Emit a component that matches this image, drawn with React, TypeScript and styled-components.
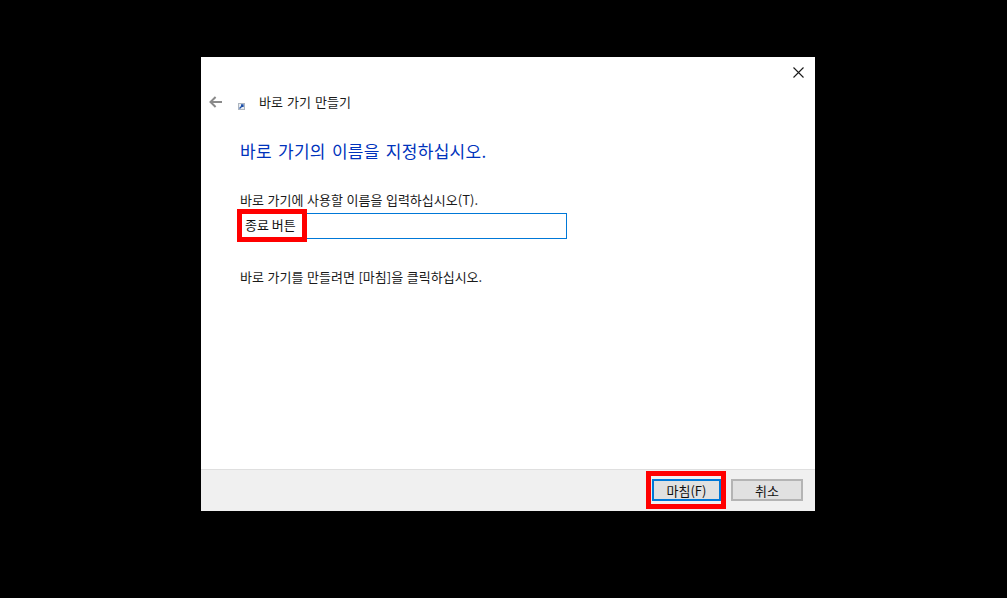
import React from 'react'
import styled, { createGlobalStyle } from 'styled-components'

const GlobalStyle = createGlobalStyle`
  html, body {
    margin: 0;
    height: 100%;
    background: #000;
  }
  body {
    font-family: "Noto Sans CJK KR", "Liberation Sans", sans-serif;
    overflow: hidden;
  }
`

export default function App() {
  return (
    <Screen>
      <GlobalStyle />
      <Dialog>
        <TitleRow>
          <CloseButton aria-label="닫기">
            <svg width="11" height="11" viewBox="0 0 11 11">
              <path d="M0.5 0.5 L10.5 10.5 M10.5 0.5 L0.5 10.5" stroke="#1a1a1a" strokeWidth="1.1" fill="none" />
            </svg>
          </CloseButton>
        </TitleRow>
        <NavRow>
          <BackArrow width="14" height="12" viewBox="0 0 14 12">
            <path d="M13 6 H1.8 M6.6 1 L1.5 6 L6.6 11" stroke="#8a8a8a" strokeWidth="2" fill="none" />
          </BackArrow>
          <ShortcutIcon width="7" height="7" viewBox="0 0 7 7">
            <rect width="7" height="7" fill="#aeb6c0" />
            <rect x="1" y="1" width="5" height="5" fill="#e8ecf1" />
            <path d="M1.5 5.5 L4.5 2.5 M3 2 H5 V4" stroke="#1c4fa8" strokeWidth="1.3" fill="none" />
          </ShortcutIcon>
          <NavTitle>바로 가기 만들기</NavTitle>
        </NavRow>
        <Body>
          <Heading>바로 가기의 이름을 지정하십시오.</Heading>
          <FieldLabel htmlFor="shortcut-name">바로 가기에 사용할 이름을 입력하십시오(T).</FieldLabel>
          <NameField>
            <NameInput id="shortcut-name" defaultValue="종료 버튼" />
            <InputHighlight />
          </NameField>
          <Hint>바로 가기를 만들려면 [마침]을 클릭하십시오.</Hint>
        </Body>
        <Footer>
          <PrimarySlot>
            <ActionButton $primary>마침(F)</ActionButton>
            <ButtonHighlight />
          </PrimarySlot>
          <ActionButton>취소</ActionButton>
        </Footer>
      </Dialog>
    </Screen>
  )
}

const Screen = styled.div`
  width: 1007px;
  height: 598px;
  padding: 57px 0 0 201px;
  box-sizing: border-box;
  background: #000;
`

const Dialog = styled.div`
  display: flex;
  flex-direction: column;
  width: 614px;
  height: 454px;
  background: #fff;
`

const TitleRow = styled.div`
  display: flex;
  justify-content: flex-end;
  height: 30px;
  padding: 10px 11px 0 0;
  box-sizing: border-box;
`

const CloseButton = styled.div`
  width: 11px;
  height: 11px;
  line-height: 0;
`

const NavRow = styled.div`
  display: flex;
  align-items: center;
  height: 30px;
  padding-left: 8px;
`

const BackArrow = styled.svg`
  flex: none;
  margin-top: -1px;
`

const ShortcutIcon = styled.svg`
  flex: none;
  margin: 8px 0 0 15px;
`

const NavTitle = styled.span`
  margin-left: 14px;
  font-size: 13px;
  line-height: 30px;
  letter-spacing: 0.05px;
  word-spacing: 1px;
  color: #1a1a1a;
`

const Body = styled.div`
  display: flex;
  flex-direction: column;
  align-items: flex-start;
  flex: 1;
  padding: 22px 0 0 39px;
`

const Heading = styled.h1`
  margin: 0;
  font-size: 17px;
  font-weight: 400;
  line-height: 24px;
  color: #0033bc;
  letter-spacing: 0.3px;
  word-spacing: 2px;
`

const FieldLabel = styled.label`
  margin-top: 28px;
  font-size: 13px;
  line-height: 18px;
  letter-spacing: 0.02px;
  word-spacing: 0.6px;
  color: #1a1a1a;
`

const NameField = styled.div`
  position: relative;
  width: 327px;
  height: 26px;
  margin-top: 4px;
`

const NameInput = styled.input`
  display: block;
  width: 100%;
  height: 100%;
  padding: 0 0 4px 4px;
  box-sizing: border-box;
  border: 1px solid #0078d7;
  outline: none;
  font: inherit;
  font-size: 13px;
  color: #111;
  background: #fff;
`

const InputHighlight = styled.div`
  position: absolute;
  left: -3px;
  top: -4px;
  width: 70px;
  height: 33px;
  box-sizing: border-box;
  border: 5px solid #f00;
  pointer-events: none;
`

const Hint = styled.p`
  margin: 29px 0 0;
  font-size: 13px;
  line-height: 18px;
  letter-spacing: 0.02px;
  word-spacing: 0.6px;
  color: #1a1a1a;
`

const Footer = styled.div`
  display: flex;
  justify-content: flex-end;
  align-items: flex-start;
  gap: 10px;
  height: 42px;
  padding: 9px 12px 0 0;
  box-sizing: border-box;
  background: #f0f0f0;
  border-top: 1px solid #dfdfdf;
`

const PrimarySlot = styled.div`
  position: relative;
  display: flex;
`

const ActionButton = styled.button<{ $primary?: boolean }>`
  width: ${({ $primary }) => ($primary ? '69px' : '72px')};
  height: 22px;
  padding: 0 0 2px;
  box-sizing: border-box;
  border: 2px solid ${({ $primary }) => ($primary ? '#0078d7' : '#b4b4b4')};
  border-radius: 0;
  background: #e1e1e1;
  font: inherit;
  font-size: 13px;
  color: #111;
`

const ButtonHighlight = styled.div`
  position: absolute;
  left: -6px;
  top: -8px;
  width: 80px;
  height: 38px;
  box-sizing: border-box;
  border: 5px solid #f00;
  pointer-events: none;
`
